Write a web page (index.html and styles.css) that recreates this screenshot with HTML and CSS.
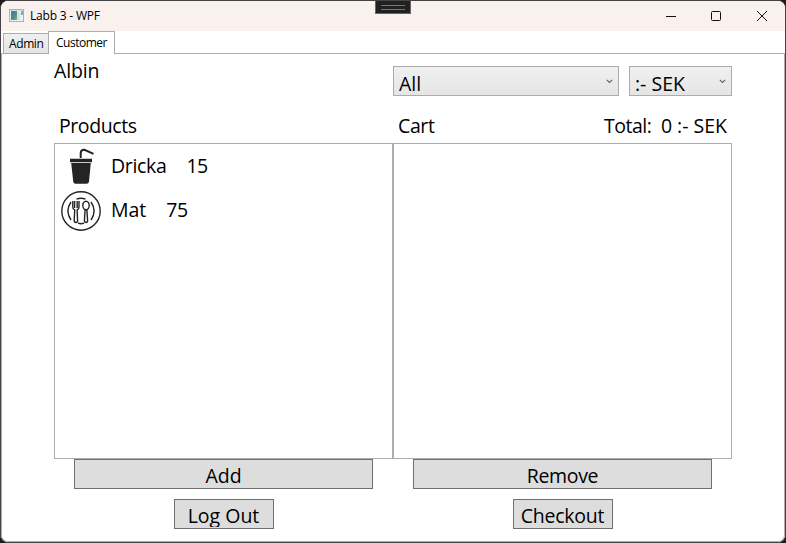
FILE: index.html
```html
<!DOCTYPE html>
<html lang="sv">
<head>
<meta charset="utf-8">
<title>Labb 3 - WPF</title>
<link rel="stylesheet" href="styles.css">
</head>
<body>
<div class="window">
  <header class="titlebar">
    <svg class="app-icon" width="16" height="14" viewBox="0 0 16 14">
      <defs><linearGradient id="pane" x1="0" y1="0" x2="1" y2="1"><stop offset="0" stop-color="#4c7896"/><stop offset=".6" stop-color="#4b9185"/><stop offset="1" stop-color="#78b87c"/></linearGradient></defs>
      <rect x=".5" y=".5" width="14" height="12" fill="#edf1f2" stroke="#a9b2b6"/>
      <rect x="1" y="1" width="13" height="1" fill="#d3dce1"/>
      <rect x="2" y="2" width="6" height="9" fill="url(#pane)"/>
      <rect x="8" y="3" width="3" height="8" fill="#d3e2e4"/>
      <rect x="12" y="2" width="2" height="4" fill="#82a9ac"/>
    </svg>
    <h1 class="title">Labb 3 - WPF</h1>
    <div class="controls">
      <svg width="10" height="10" viewBox="0 0 10 10"><path d="M0 5.5H10" stroke="#111"/></svg>
      <svg width="10" height="10" viewBox="0 0 10 10"><rect x=".5" y=".5" width="9" height="9" rx="1" fill="none" stroke="#111"/></svg>
      <svg class="close" width="10" height="10" viewBox="0 0 10 10"><path d="M0 0L10 10M10 0L0 10" stroke="#111"/></svg>
    </div>
    <div class="debug-handle"></div>
  </header>
  <nav class="tabs">
    <div class="tab"><span class="admin">Admin</span></div>
    <div class="tab active"><span class="customer">Customer</span></div>
  </nav>
  <main class="content">
    <div class="top">
      <div class="user"><span class="t-albin">Albin</span></div>
      <div class="filters">
        <div class="combo category"><span class="t-all">All</span><svg width="7" height="5" viewBox="0 0 7 5"><path d="M.8 .8L3.5 3.4L6.2 .8" fill="none" stroke="#606060" stroke-width="1.1"/></svg></div>
        <div class="combo currency"><span class="t-sek">:- SEK</span><svg width="7" height="5" viewBox="0 0 7 5"><path d="M.8 .8L3.5 3.4L6.2 .8" fill="none" stroke="#606060" stroke-width="1.1"/></svg></div>
      </div>
    </div>
    <div class="columns">
      <section class="column">
        <div class="heading"><span class="t-products">Products</span></div>
        <div class="list">
          <div class="item">
            <svg class="icon" width="40" height="40" viewBox="0 0 40 40">
              <path d="M19.7 11V5.8Q20 2.6 23.5 2.8L32.5 6.9" fill="none" stroke="#242424" stroke-width="2"/>
              <path d="M9 11.7H31V15.2H9ZM10.2 16H29.8L28 34.6Q27.8 36.8 25.6 36.8H14.6Q12.4 36.8 12.2 34.6Z" fill="#242424"/>
            </svg>
            <span class="name t-dricka">Dricka</span><span class="price">15</span>
          </div>
          <div class="item">
            <svg class="icon" width="40" height="40" viewBox="0 0 40 40" fill="none" stroke="#242424">
              <circle cx="20" cy="20" r="19.2" stroke-width="1.4"/>
              <path d="M15.5 8.2Q20 6.3 24.5 8.2M17 32.2Q20 33.2 23 32.2M10 11Q3.8 20 10 29M30 11Q36.2 20 30 29" stroke-width="1.4"/>
              <path d="M11.8 10V16Q11.8 18.3 13.7 19L13.2 29.5Q13.2 31.5 14.9 31.5T16.6 29.5L16.1 19Q18 18.3 18 16V10" stroke-width="1.4"/>
              <path d="M13.6 10V17M16.2 10V17" stroke-width="1.4"/>
              <ellipse cx="25" cy="14.5" rx="3.2" ry="4.3" stroke-width="1.4"/>
              <path d="M24.1 19L23.4 29.5Q23.4 31.5 25 31.5T26.6 29.5L25.9 19" stroke-width="1.4"/>
            </svg>
            <span class="name t-mat">Mat</span><span class="price">75</span>
          </div>
        </div>
        <div class="button wide"><span class="t-add">Add</span></div>
        <div class="button small"><span class="t-logout">Log Out</span></div>
      </section>
      <section class="column">
        <div class="heading"><span class="t-cart">Cart</span><div class="total"><span class="t-total">Total:</span><span class="t-zero">0</span><span class="t-sek">:- SEK</span></div></div>
        <div class="list"></div>
        <div class="button wide"><span class="t-remove">Remove</span></div>
        <div class="button small"><span class="t-checkout">Checkout</span></div>
      </section>
    </div>
  </main>
</div>
</body>
</html>
```
FILE: styles.css
```css
* { box-sizing: border-box; }
html { background: #1c1c1c; }
body { margin: 0; width: 786px; height: 543px; overflow: hidden; font: 19.5px/28px "Open Sans", "Noto Sans", sans-serif; color: #000; }
span { white-space: nowrap; }
svg { display: block; flex: none; }
.window { width: 786px; height: 543px; border: 1px solid #454345; border-radius: 8px; background: #fff; overflow: hidden; display: flex; flex-direction: column; }
.titlebar { position: relative; height: 30px; flex: none; background: #f9f1ee; display: flex; align-items: center; padding-left: 8px; }
.app-icon { margin-top: -1px; }
.title { margin: 0 0 0 5px; font-size: 12px; line-height: 16px; font-weight: 400; letter-spacing: -.2px; }
.controls { margin-left: auto; display: flex; gap: 35px; padding-right: 18px; margin-top: -1px; }
.close { margin-left: 1px; }
.debug-handle { position: absolute; left: 374px; top: -1px; width: 36px; height: 14px; border: 1px solid #656565; background: #202120; }
.debug-handle::before { content: ""; display: block; margin: 4px 5px 0; height: 3px; border: solid #747674; border-width: 1px 0; }
.tabs { height: 22px; flex: none; display: flex; align-items: flex-end; padding-left: 2px; font-size: 12px; line-height: 16px; }
.tab { height: 20px; width: 45px; border: 1px solid #acacac; border-width: 1px 0 0 1px; background: linear-gradient(#f0f0f0, #e5e5e5); padding: 2px 0 0 5px; }
.tab.active { position: relative; z-index: 1; width: 67px; height: 23px; margin-bottom: -1px; padding: 3px 0 0 7px; border-right-width: 1px; background: #fff; }
.admin { letter-spacing: -.4px; }
.customer { letter-spacing: -.5px; }
.content { flex: 1; border: 1px solid #acacac; border-radius: 0 0 7px 7px; padding: 0 52px; }
.top { height: 58px; display: flex; }
.user { width: 339px; padding-top: 3px; }
.filters { flex: 1; display: flex; gap: 10px; padding-top: 12px; }
.combo { height: 30px; border: 1px solid #acacac; background: linear-gradient(#f0f0f0, #e5e5e5); display: flex; justify-content: space-between; padding: 3px 5px 0; }
.combo svg { margin-top: 9px; }
.category { width: 226px; }
.currency { width: 103px; }
.columns { display: flex; width: 678px; }
.column { width: 339px; display: flex; flex-direction: column; align-items: center; }
.heading { width: 100%; height: 31px; display: flex; justify-content: space-between; padding: 0 5px; }
.total { display: flex; }
.t-total { margin-right: 10px; letter-spacing: -.5px; }
.t-zero { margin-right: 6px; }
.total .t-total { width: 47px; }
.total .t-zero { width: 10px; }
.t-products { letter-spacing: -.42px; }
.t-albin { letter-spacing: -.15px; }
.t-cart { letter-spacing: -.4px; }
.t-dricka { letter-spacing: -.35px; }
.t-remove { letter-spacing: -.35px; }
.t-checkout { letter-spacing: -.25px; }
.list { width: 100%; height: 316px; border: 1px solid #abadb3; padding: 1px 6px; }
.item { height: 44px; display: flex; align-items: center; }
.name { margin: -2px 20px 0 10px; }
.price { margin-top: -2px; letter-spacing: -.5px; }
.button { height: 30px; border: 1px solid #707070; background: #ddd; text-align: center; padding-top: 2px; overflow: hidden; }
.button span { display: block; height: 25px; overflow: hidden; }
.wide { width: 299px; }
.small { width: 100px; margin-top: 10px; }
```
